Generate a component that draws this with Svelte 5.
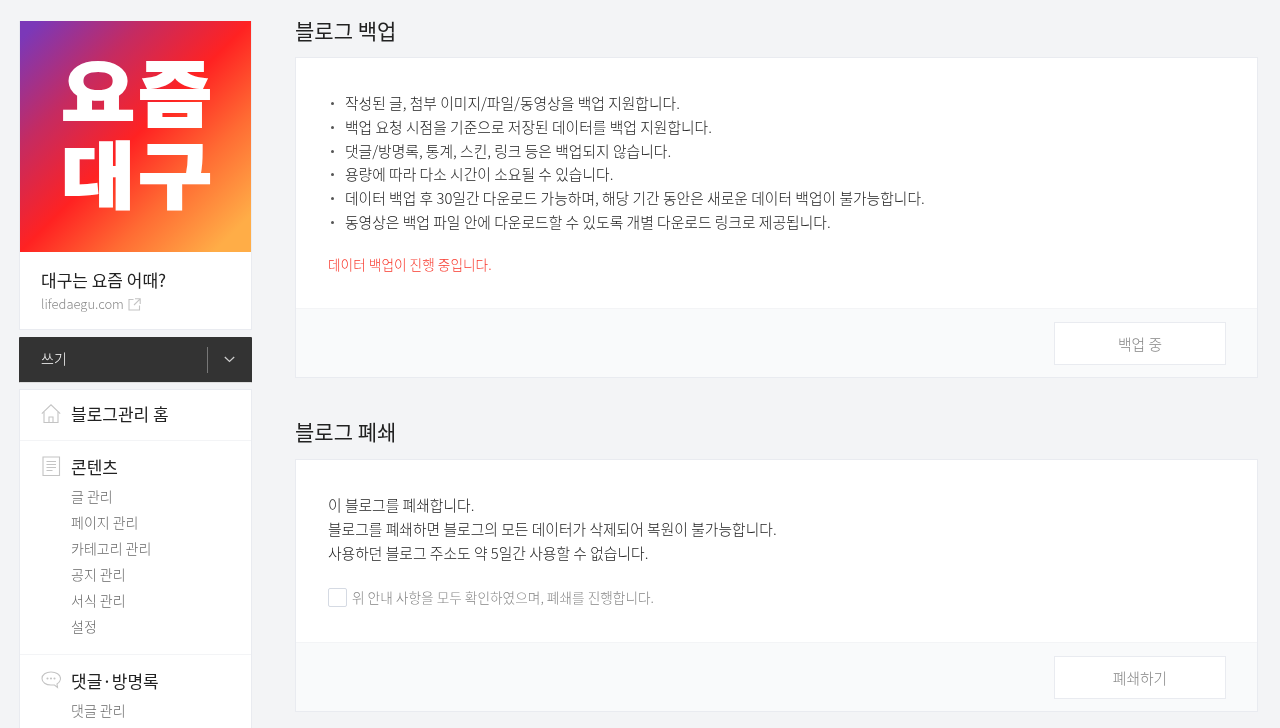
<script lang="ts">
  const backupNotes = [
    '작성된 글, 첨부 이미지/파일/동영상을 백업 지원합니다.',
    '백업 요청 시점을 기준으로 저장된 데이터를 백업 지원합니다.',
    '댓글/방명록, 통계, 스킨, 링크 등은 백업되지 않습니다.',
    '용량에 따라 다소 시간이 소요될 수 있습니다.',
    '데이터 백업 후 30일간 다운로드 가능하며, 해당 기간 동안은 새로운 데이터 백업이 불가능합니다.',
    '동영상은 백업 파일 안에 다운로드할 수 있도록 개별 다운로드 링크로 제공됩니다.'
  ];
  const contentLinks = ['글 관리', '페이지 관리', '카테고리 관리', '공지 관리', '서식 관리', '설정'];
</script>

<div class="page">
  <aside class="side">
    <div class="profile">
      <div class="logo">
        <span>요</span><span>즘</span><span>대</span><span>구</span>
      </div>
      <div class="blog-info">
        <div class="blog-name">대구는 요즘 어때?</div>
        <div class="blog-url">
          lifedaegu.com
          <svg width="13" height="13" viewBox="0 0 13 13" fill="none" stroke="#c4c4c4" stroke-width="1.1">
            <path d="M5.500 1.500H1v10.500h10.500V7.500" />
            <path d="M7 0.800h5.200V6M12.200 0.800L6 7" />
          </svg>
        </div>
      </div>
    </div>

    <div class="write">
      <span class="write-label">쓰기</span>
      <span class="write-more">
        <svg width="11" height="7" viewBox="0 0 11 7" fill="none" stroke="#d0d0d0" stroke-width="1.2">
          <path d="M0.800 1l4.700 4.500L10.200 1" />
        </svg>
      </span>
    </div>

    <nav class="menu">
      <div class="menu-home">
        <svg class="ico" width="20" height="20" viewBox="0 0 20 20" fill="none" stroke="#c4c4c4" stroke-width="1.1">
          <path d="M0.800 9.600L10 0.800l9.200 8.800" />
          <path d="M3 8v10.500h14V8" />
          <path d="M8 18.500v-5.500h4v5.500" />
        </svg>
        <span class="menu-title">블로그관리 홈</span>
      </div>
      <div class="menu-group first">
        <div class="menu-head">
          <svg class="ico" width="20" height="20" viewBox="0 0 20 20" fill="none" stroke="#c4c4c4" stroke-width="1.1">
            <path d="M2 1h16.500v18.500H2z" />
            <path d="M5.500 5.500h9.500M5.500 8.500h9.500M5.500 11.500h9.500M5.500 14.500h6" />
          </svg>
          <span class="menu-title">콘텐츠</span>
        </div>
        <ul>
          {#each contentLinks as link}
            <li>{link}</li>
          {/each}
        </ul>
      </div>
      <div class="menu-group">
        <div class="menu-head">
          <svg class="ico" width="20" height="20" viewBox="0 0 20 20" fill="none" stroke="#c4c4c4" stroke-width="1.1">
            <path d="M10 2C5 2 1 4.500 1 8.500s4 6.500 9 6.500h3.500l3 2.500-0.500-3.500c2-1.200 3.500-3 3.500-5.500C19.500 4.500 15 2 10 2z" />
            <circle cx="6.500" cy="8.500" r="0.500" />
            <circle cx="10" cy="8.500" r="0.500" />
            <circle cx="13.500" cy="8.500" r="0.500" />
          </svg>
          <span class="menu-title">댓글·방명록</span>
        </div>
        <ul>
          <li>댓글 관리</li>
        </ul>
      </div>
    </nav>
  </aside>

  <main class="main">
    <section class="block">
      <h2>블로그 백업</h2>
      <div class="card">
        <div class="card-body backup-body">
          <ul class="notes">
            {#each backupNotes as note}
              <li>{note}</li>
            {/each}
          </ul>
          <p class="warn">데이터 백업이 진행 중입니다.</p>
        </div>
        <div class="card-foot">
          <button class="foot-btn" disabled>백업 중</button>
        </div>
      </div>
    </section>

    <section class="block">
      <h2>블로그 폐쇄</h2>
      <div class="card">
        <div class="card-body close-body">
          <p class="lines">
            이 블로그를 폐쇄합니다.<br />
            블로그를 폐쇄하면 블로그의 모든 데이터가 삭제되어 복원이 불가능합니다.<br />
            사용하던 블로그 주소도 약 5일간 사용할 수 없습니다.
          </p>
          <label class="agree">
            <span class="box"></span>
            위 안내 사항을 모두 확인하였으며, 폐쇄를 진행합니다.
          </label>
        </div>
        <div class="card-foot">
          <button class="foot-btn" disabled>폐쇄하기</button>
        </div>
      </div>
    </section>
  </main>
</div>

<style>
  :global(body) {
    margin: 0;
    background: #f3f4f6;
    overflow: hidden;
  }

  .page {
    display: flex;
    height: 728px;
    overflow: hidden;
    padding-left: 19px;
    font-family: "Noto Sans CJK KR", "Noto Sans", sans-serif;
    font-weight: 300;
    color: #222;
    will-change: transform;
  }

  .side {
    width: 233px;
    flex: none;
    padding-top: 21px;
  }

  .profile {
    background: #fff;
    border: 1px solid #e9ebf0;
    border-top: 0;
    height: 309px;
    box-sizing: border-box;
  }

  .logo {
    width: 231px;
    height: 231px;
    background: linear-gradient(135deg, #7b38b8 4%, #c42b62 27%, #ff2222 50%, #ff6b33 70%, #ffad47 92%);
    display: grid;
    grid-template-columns: 74px 74px;
    grid-template-rows: 74px 74px;
    column-gap: 3px;
    row-gap: 9px;
    padding: 30px 0 0 41px;
    box-sizing: border-box;
    color: #fff;
    font-size: 80px;
    font-weight: 900;
    line-height: 74px;
    text-align: center;
    -webkit-text-stroke: 2px #fff;
  }

  .logo span {
    display: block;
    transform: scaleY(0.9);
  }

  .blog-info {
    padding: 16px 0 0 21px;
  }

  .blog-name {
    font-size: 17px;
    font-weight: 400;
    line-height: 24px;
    color: #222;
  }

  .blog-url {
    display: flex;
    align-items: center;
    gap: 4px;
    font-size: 13px;
    line-height: 22px;
    margin-top: 1px;
    color: #8a8a8a;
  }

  .write {
    display: flex;
    align-items: center;
    justify-content: space-between;
    height: 46px;
    margin-top: 7px;
    background: #333;
    color: #fff;
    font-size: 14px;
    border-bottom: 1px solid #ddd;
    box-sizing: border-box;
    border-radius: 1px;
  }

  .write-label {
    padding: 0 0 3px 22px;
  }

  .write-more {
    display: flex;
    align-items: center;
    justify-content: center;
    width: 44px;
    height: 26px;
    border-left: 1px solid #777;
    margin-right: 1px;
    box-sizing: border-box;
  }

  .menu {
    margin-top: 6px;
    background: #fff;
    border: 1px solid #e9ebf0;
    box-sizing: border-box;
  }

  .menu-home {
    display: flex;
    align-items: center;
    height: 51px;
    box-sizing: border-box;
    padding: 0 0 3px 21px;
    border-bottom: 1px solid #f3f4f6;
  }

  .ico {
    flex: none;
    margin-right: 10px;
  }

  .menu-title {
    font-size: 17px;
    font-weight: 400;
    color: #222;
  }

  .menu-group {
    padding: 12px 0 15px 21px;
  }

  .menu-group.first {
    padding-bottom: 14.600px;
    border-bottom: 1px solid #f3f4f6;
  }

  .menu-head {
    display: flex;
    align-items: center;
    height: 26px;
  }

  .menu-group ul {
    list-style: none;
    margin: 5px 0 0 30px;
    padding: 0;
  }

  .menu-group li {
    font-size: 14px;
    line-height: 25.900px;
    color: #6a6a6a;
  }

  .main {
    flex: 1;
    padding: 0 22px 0 43px;
    min-width: 0;
  }

  .block {
    margin-bottom: 28px;
  }

  h2 {
    margin: 0;
    font-size: 21px;
    font-weight: 400;
    line-height: 30px;
    color: #222;
    padding-top: 15px;
    padding-bottom: 12px;
  }

  .block + .block h2 {
    padding-top: 10px;
    padding-bottom: 13px;
  }

  .card {
    background: #fff;
    border: 1px solid #e9ebf0;
  }

  .card-body {
    padding: 0 32px;
    box-sizing: border-box;
  }

  .backup-body {
    height: 250px;
    padding-top: 33px;
  }

  .close-body {
    height: 182px;
    padding-top: 33px;
  }

  .notes {
    list-style: none;
    margin: 0;
    padding: 0;
  }

  .notes li {
    font-size: 14.800px;
    line-height: 23.800px;
    padding-left: 17px;
    position: relative;
    color: #222;
  }

  .notes li::before {
    content: "";
    position: absolute;
    left: 3px;
    top: 11px;
    width: 3px;
    height: 3px;
    border-radius: 50%;
    background: #555;
  }

  .warn {
    margin: 18px 0 0;
    font-size: 13.700px;
    line-height: 24px;
    color: #f8382c;
  }

  .lines {
    margin: 0;
    font-size: 14.800px;
    line-height: 24px;
    color: #222;
  }

  .agree {
    display: flex;
    align-items: center;
    gap: 5px;
    margin-top: 22px;
    font-size: 13.700px;
    line-height: 20px;
    color: #868686;
  }

  .box {
    width: 17px;
    height: 17px;
    border: 1px solid #d5dae3;
    border-radius: 2px;
    background: #fff;
  }

  .card-foot {
    display: flex;
    justify-content: flex-end;
    align-items: center;
    height: 69px;
    padding-right: 31px;
    background: #f9fafb;
    border-top: 1px solid #f3f4f6;
    box-sizing: border-box;
  }

  .foot-btn {
    width: 172px;
    height: 43px;
    background: #fff;
    border: 1px solid #e9ebf0;
    font: inherit;
    font-size: 14.800px;
    color: #868686;
  }
</style>
